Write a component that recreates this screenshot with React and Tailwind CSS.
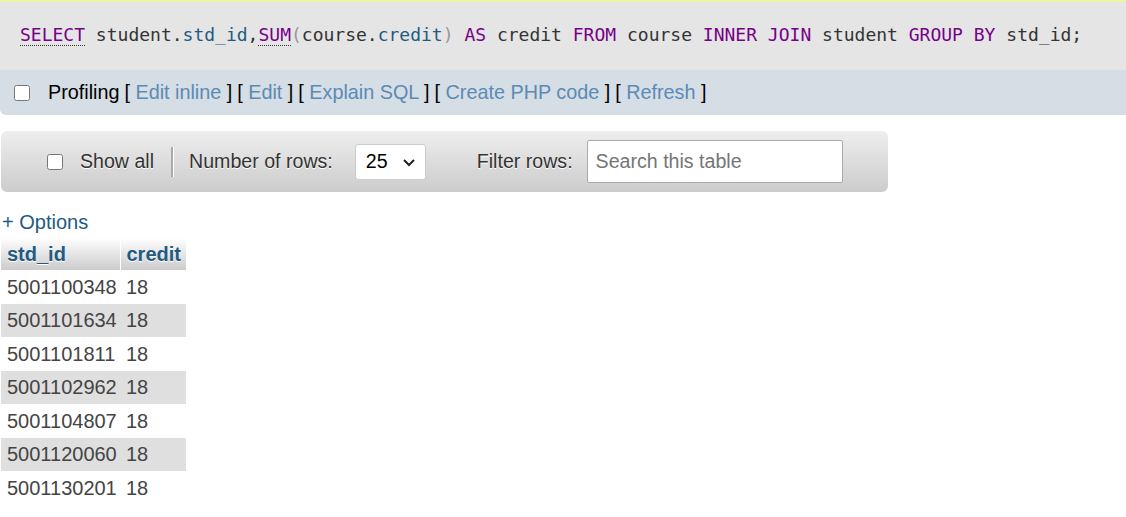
export default function App() {
  const rows = [
    "5001100348",
    "5001101634",
    "5001101811",
    "5001102962",
    "5001104807",
    "5001120060",
    "5001130201",
  ];
  const kw = "text-[#770088] ";
  const col = "text-[#235a81]";

  return (
    <div className="w-[1126px] h-[517px] bg-white overflow-hidden font-['Liberation_Sans',Arial,sans-serif] text-[20px] text-[#444]">
      {/* SQL query */}
      <div className="border-t-2 border-[#eef5a0] bg-[#e5e5e5] h-[70px] pl-[20px] pb-[4px] flex items-center">
        <code className="font-['DejaVu_Sans_Mono',monospace] text-[18px] text-[#333] whitespace-pre">
          <span className={kw + "border-b border-dotted border-[#333]"}>SELECT</span>
          {" student."}
          <span className={col}>std_id</span>
          {","}
          <span className={kw + "border-b border-dotted border-[#333]"}>SUM</span>
          <span className="text-[#999]">(</span>
          {"course."}
          <span className={col}>credit</span>
          <span className="text-[#999]">)</span>
          {" "}
          <span className={kw}>AS</span>
          {" credit "}
          <span className={kw}>FROM</span>
          {" course "}
          <span className={kw}>INNER JOIN</span>
          {" student "}
          <span className={kw}>GROUP BY</span>
          {" std_id;"}
        </code>
      </div>

      {/* Profiling bar */}
      <div className="bg-[#d5dde5] h-[45px] flex items-center pl-[14px] rounded-bl-[6px] text-black text-[19.8px]">
        <input type="checkbox" className="w-[16px] h-[16px] m-0 mr-[18px]" />
        <span>Profiling</span>
        <span className="ml-[5px]">[ <a className="text-[#5b8bb5]">Edit inline</a> ]</span>
        <span className="ml-[5px]">[ <a className="text-[#5b8bb5]">Edit</a> ]</span>
        <span className="ml-[5px]">[ <a className="text-[#5b8bb5]">Explain SQL</a> ]</span>
        <span className="ml-[5px]">[ <a className="text-[#5b8bb5]">Create PHP code</a> ]</span>
        <span className="ml-[5px]">[ <a className="text-[#5b8bb5]">Refresh</a> ]</span>
      </div>

      {/* Navigation */}
      <div className="mt-[16px] ml-[1px] w-[887px] h-[61px] rounded-[6px] bg-gradient-to-b from-[#eeeeee] to-[#cccccc] flex items-center text-[#333] text-[19.6px] [text-shadow:0_1px_0_#fff]">
        <input type="checkbox" className="w-[16px] h-[16px] m-0 ml-[46px] mr-[17px]" />
        <span>Show all</span>
        <span className="ml-[17px] mr-[15px] w-[3px] h-[30px] bg-[#aaa] border-r border-white" />
        <span>Number of rows:</span>
        <div className="ml-[22px] w-[71px] h-[36px] bg-white border border-[#ccc] rounded-[3px] flex items-center justify-between pl-[10px] pr-[9px] [text-shadow:none]">
          <span className="text-black">25</span>
          <svg width="14" height="10" viewBox="0 0 14 10">
            <path d="M2 3 L7 8 L12 3" fill="none" stroke="#222" strokeWidth="2" />
          </svg>
        </div>
        <span className="ml-[51px]">Filter rows:</span>
        <div className="ml-[14px] w-[256px] h-[43px] bg-white border border-[#aaa] rounded-[2px] flex items-center pl-[8px] text-[#757575] [text-shadow:none]">
          Search this table
        </div>
      </div>

      {/* Options */}
      <div className="mt-[18px] ml-[2px] text-[#235a81] leading-[24px]">+ Options</div>

      {/* Result table */}
      <table className="border-collapse ml-[1px] mt-[4px]">
        <thead>
          <tr>
            <th className="h-[32px] w-[119px] text-left pl-[6px] font-bold text-[#235a81] bg-gradient-to-b from-white to-[#cccccc] border-r border-white [text-shadow:0_1px_0_#fff]">
              std_id
            </th>
            <th className="h-[32px] w-[66px] text-left pl-[6px] font-bold text-[#235a81] bg-gradient-to-b from-white to-[#cccccc] [text-shadow:0_1px_0_#fff]">
              credit
            </th>
          </tr>
        </thead>
        <tbody>
          {rows.map((id, i) => (
            <tr key={id} className={i % 2 === 0 ? "bg-white" : "bg-[#dfdfdf]"}>
              <td className="h-[33.5px] pl-[6px] text-[#444]">{id}</td>
              <td className="h-[33.5px] pl-[6px] text-[#444]">18</td>
            </tr>
          ))}
        </tbody>
      </table>
    </div>
  );
}
